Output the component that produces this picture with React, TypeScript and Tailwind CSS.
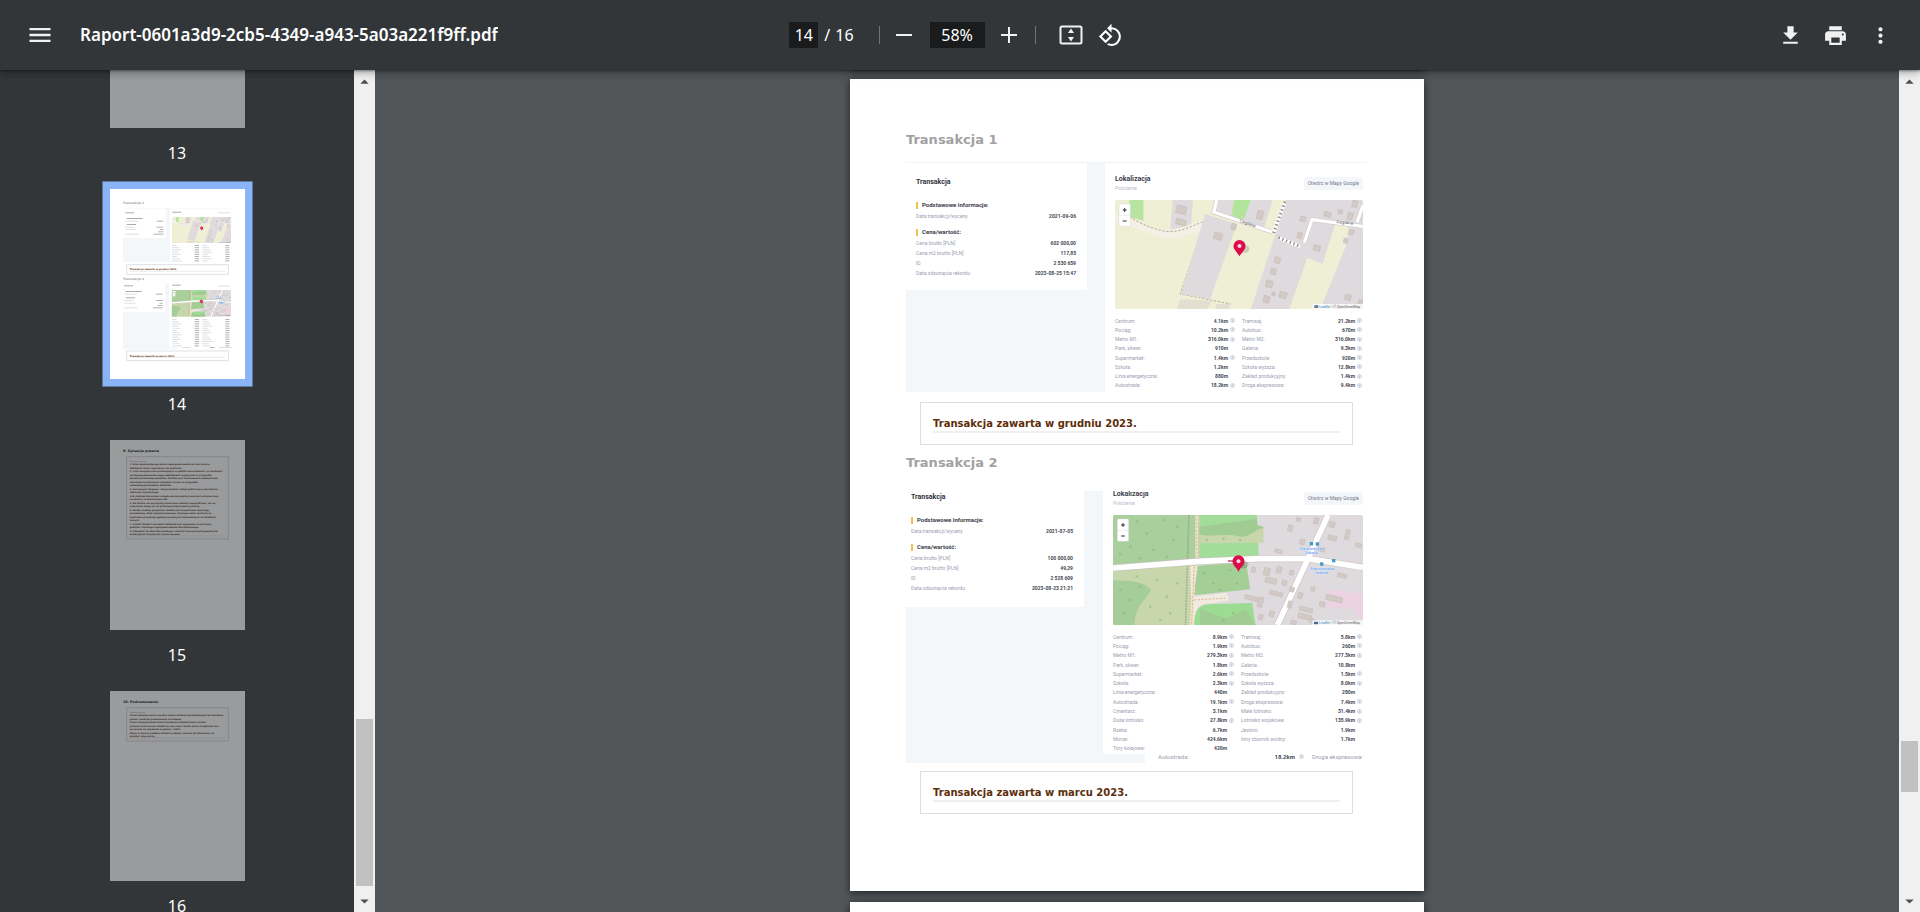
import type { ReactNode } from "react";
import { MdDownload, MdMenu, MdMoreVert, MdPrint, MdRotate90DegreesCcw } from "react-icons/md";

type Distance = [label: string, value: string, info: boolean];

const nearbyFirst: [Distance, Distance][] = [
  [["Centrum:", "4.1km", true], ["Tramwaj:", "21.2km", true]],
  [["Pociąg:", "10.2km", true], ["Autobus:", "670m", true]],
  [["Metro M1:", "316.0km", true], ["Metro M2:", "316.0km", true]],
  [["Park, skwer:", "910m", false], ["Galeria:", "9.3km", true]],
  [["Supermarket:", "1.4km", true], ["Przedszkole:", "920m", true]],
  [["Szkoła:", "1.2km", false], ["Szkoła wyższa:", "12.8km", true]],
  [["Linia energetyczna:", "880m", false], ["Zakład produkcyjny:", "1.4km", true]],
  [["Autostrada:", "18.2km", true], ["Droga ekspresowa:", "9.4km", true]],
];

const nearbySecond: [Distance, Distance | null][] = [
  [["Centrum:", "8.9km", true], ["Tramwaj:", "5.8km", true]],
  [["Pociąg:", "1.9km", true], ["Autobus:", "260m", true]],
  [["Metro M1:", "279.3km", true], ["Metro M2:", "277.3km", true]],
  [["Park, skwer:", "1.8km", true], ["Galeria:", "10.8km", false]],
  [["Supermarket:", "2.6km", true], ["Przedszkole:", "1.5km", true]],
  [["Szkoła:", "2.3km", true], ["Szkoła wyższa:", "8.0km", true]],
  [["Linia energetyczna:", "440m", false], ["Zakład produkcyjny:", "280m", false]],
  [["Autostrada:", "19.1km", true], ["Droga ekspresowa:", "7.4km", true]],
  [["Cmentarz:", "3.1km", false], ["Małe lotnisko:", "31.4km", true]],
  [["Duże lotnisko:", "27.8km", true], ["Lotnisko wojskowe:", "135.9km", true]],
  [["Rzeka:", "6.7km", false], ["Jezioro:", "1.9km", false]],
  [["Morze:", "424.6km", false], ["Inny zbiornik wodny:", "1.7km", false]],
  [["Tory kolejowe:", "420m", false], null],
];

function Pin({ x, y }: { x: number; y: number }) {
  return (
    <g>
      <ellipse cx={x + 14} cy={y - 22} rx="16" ry="12" fill="#000" opacity="0.14" />
      <path
        d={`M${x} ${y}C${x - 6} ${y - 12} ${x - 18} ${y - 19} ${x - 18} ${y - 31}a18 18 0 0 1 36 0C${x + 18} ${y - 19} ${x + 6} ${y - 12} ${x} ${y}z`}
        fill="#dc0c4b"
      />
      <circle cx={x} cy={y - 31} r="6" fill="#f7d5df" />
    </g>
  );
}

function ZoomControl({ x, y }: { x: number; y: number }) {
  return (
    <g>
      <rect x={x} y={y} width="34" height="67" rx="3" fill="#fff" stroke="#cfcfcf" />
      <path d={`M${x} ${y + 34}h34`} stroke="#ddd" strokeWidth="1.5" />
      <path d={`M${x + 11} ${y + 18}h12M${x + 17} ${y + 12}v12M${x + 11} ${y + 51}h12`} stroke="#333" strokeWidth="3" />
    </g>
  );
}

function Attribution({ x, y }: { x: number; y: number }) {
  return (
    <g>
      <rect x={x} y={y} width="152" height="15" fill="#fff" opacity="0.75" />
      <path d={`M${x + 5} ${y + 6}h12`} stroke="#3277c9" strokeWidth="4" />
      <path d={`M${x + 5} ${y + 10}h12`} stroke="#444" strokeWidth="3" />
      <text x={x + 20} y={y + 11} fontSize="11" fill="#2f86b8">Leaflet</text>
      <text x={x + 58} y={y + 11} fontSize="10" fill="#555">| © OpenStreetMap</text>
    </g>
  );
}

function Houses({ at }: { at: [number, number, number, number][] }) {
  return (
    <g fill="#d3cac6" stroke="#c2b8b3" strokeWidth="1.5">
      {at.map(([x, y, w, h]) => (
        <rect key={`${x}-${y}`} x={x} y={y} width={w} height={h} transform={`rotate(14 ${x} ${y})`} />
      ))}
    </g>
  );
}

type Frame = { className?: string; x?: number; y?: number; width?: number; height?: number };

function FieldMap(frame: Frame) {
  return (
    <svg {...frame} viewBox="75 150 743 327" preserveAspectRatio="none" fontFamily="Roboto, sans-serif" role="img" aria-label="Mapa">
      <rect x="75" y="150" width="743" height="327" fill="#eeefd4" />
      <path d="M118 150h42v62l-42-12z" fill="#b7e4a1" />
      <path d="M248 150h60l-4 72-64 22z" fill="#dfdadd" />
      <path d="M75 190c40 8 60 28 105 42 50 16 95 6 160-24l8 6-14 36c-10-8-30 0-64 12-30 8-66 0-90-10-40-16-70-30-105-40z" fill="#f4f0e6" />
      <path d="M118 200c40 24 70 38 110 44 40 4 70-12 118-32M346 212L270 432l92 18 60 12" fill="none" stroke="#aa9f92" strokeWidth="2.5" strokeDasharray="7 5" />
      <path d="M345 192l95 30-80 226-88-16z" fill="#dfdadd" />
      <path d="M378 150h172l-30 90-145-55z" fill="#dfdadd" />
      <path d="M432 150h50l-22 60-36-14z" fill="#b2e59b" />
      <path d="M546 150h40l-33 112-33-20z" fill="#eeefd4" />
      <path d="M586 150h232v75h-84l-37 117-46-18-98-62z" fill="#dfdadd" />
      <path d="M553 262l98 62-53 153H482z" fill="#dfdadd" />
      <path d="M735 225h41l-8 60-78 192h-92l53-152 46 17z" fill="#eeefd4" />
      <path d="M776 225h42v252H690l78-192z" fill="#dfdadd" />
      <path d="M270 448l95 4-14 25h-90zM378 462h40v15h-40z" fill="#e2dfd0" />
      <path d="M380 150l-9 36 174 60M642 278l23-69 153 20M818 166l-18 52" fill="none" stroke="#c9c3c0" strokeWidth="13" />
      <path d="M380 150l-9 36 174 60M642 278l23-69 153 20M818 166l-18 52" fill="none" stroke="#fff" strokeWidth="10" />
      <path d="M584 155l-34 95M565 263l64 26" fill="none" stroke="#fff" strokeWidth="11" />
      <path d="M584 155l-34 95M565 263l64 26" fill="none" stroke="#8b8586" strokeWidth="9" strokeDasharray="4 8" />
      <Houses
        at={[
          [262, 164, 30, 24], [260, 205, 30, 16], [374, 246, 24, 20], [426, 220, 14, 18], [504, 180, 18, 26], [632, 198, 16, 14],
          [624, 246, 14, 18], [704, 184, 20, 14], [746, 178, 12, 12], [788, 150, 16, 20], [774, 186, 16, 22], [778, 238, 14, 14],
          [672, 284, 20, 16], [762, 264, 12, 14], [556, 320, 16, 18], [544, 354, 16, 18], [530, 390, 20, 20], [522, 436, 18, 20],
          [546, 426, 10, 10], [570, 424, 22, 18], [766, 432, 18, 16], [806, 448, 12, 14],
        ]}
      />
      <g fontSize="14" fill="#4a4648" stroke="#fff" strokeWidth="2" paintOrder="stroke">
        <text x="447" y="216" transform="rotate(18 447 216)">Ceglana</text>
        <text x="738" y="219" transform="rotate(5 738 219)">Ceglana</text>
      </g>
      <Pin x={448} y={319} />
      <ZoomControl x={87} y={162} />
      <Attribution x={667} y={462} />
    </svg>
  );
}

const trees = [
  [140, 125], [170, 160], [220, 120], [250, 180], [190, 210], [120, 200], [90, 222], [260, 140], [150, 235], [230, 230], [90, 330],
  [120, 360], [100, 400], [150, 320], [200, 300], [180, 380], [230, 350], [240, 400], [210, 420], [140, 290], [260, 310], [340, 280],
  [370, 310], [420, 270], [440, 310], [390, 330], [350, 180], [400, 176], [450, 180], [430, 400], [400, 420],
];

function ForestMap(frame: Frame) {
  return (
    <svg {...frame} viewBox="68 105 751 330" preserveAspectRatio="none" fontFamily="Roboto, sans-serif" role="img" aria-label="Mapa">
      <rect x="68" y="105" width="751" height="330" fill="#dfdadd" />
      <path d="M68 105h260v140l-260 12z" fill="#a9cf9d" />
      <path d="M68 270l252-16-14 181H68z" fill="#c8d7ab" />
      <path d="M68 300c40 4 90 0 115 30-20 34-50 50-50 105H68z" fill="#a4cd98" />
      <path d="M328 105h172l6 125-178 10z" fill="#a3dd9a" />
      <path d="M328 140l172-24 2 20 18 4-6 22-40 10-60-6-60 4-26-6z" fill="#a0cc93" />
      <path d="M328 164c50 8 80-6 120 6 30 6 50-28 72-24v42l-192 2z" fill="#c8d7ab" />
      <path d="M318 258l150-12 12 82-170 18z" fill="#a3cf97" />
      <path d="M300 258h22l-12 92h-8z" fill="#f1e8da" />
      <path d="M306 350l104-12 6 24-70 10c-24 4-30 16-34 63h-10z" fill="#f0eadf" />
      <path d="M312 435c0-40 10-58 40-62l134-4 10 66z" fill="#9bdb92" />
      <path d="M330 386l78 30 58-28 30 47H330z" fill="#a0cc93" />
      <path d="M712 328l107 14v80l-30-36-82-4z" fill="#ecd2e2" />
      <path d="M296 105l-10 330" stroke="#8f9d89" strokeWidth="5" strokeDasharray="5 3" opacity="0.7" />
      <path d="M320 105v145M312 260l-8 175" stroke="#f3e3cf" strokeWidth="9" />
      <path d="M320 105v145M312 260l-8 175M312 360l98-6" fill="none" stroke="#d68a66" strokeWidth="2.5" strokeDasharray="6 5" opacity="0.75" />
      <path d="M68 264l260-20 180-8h146l165 26M654 236l60-131M654 236l-92 199" fill="none" stroke="#cbc4c3" strokeWidth="21" />
      <path d="M68 264l260-20 180-8h146l165 26M654 236l60-131M654 236l-92 199" fill="none" stroke="#fff" strokeWidth="17" />
      <Houses
        at={[
          [596, 134, 14, 18], [620, 112, 12, 10], [674, 112, 14, 18], [720, 124, 16, 16], [770, 148, 12, 30], [716, 164, 26, 14],
          [556, 206, 22, 10], [632, 176, 14, 16], [686, 200, 20, 12], [798, 188, 18, 12], [486, 260, 12, 16], [524, 262, 18, 22],
          [528, 290, 34, 16], [562, 258, 14, 20], [600, 270, 12, 14], [578, 300, 14, 14], [600, 320, 14, 14], [540, 330, 40, 12],
          [466, 344, 40, 12], [508, 350, 14, 30], [626, 336, 14, 18], [664, 320, 12, 12], [596, 362, 12, 20], [630, 378, 40, 12],
          [626, 398, 40, 14], [508, 402, 12, 16], [540, 392, 14, 16], [710, 342, 50, 16], [744, 278, 28, 12], [604, 420, 16, 12],
          [690, 364, 16, 14], [660, 414, 14, 14],
        ]}
      />
      <g fill="#7fae78">
        {trees.map(([x, y]) => (
          <circle key={`${x}-${y}`} cx={x} cy={y} r="4" opacity="0.45" />
        ))}
      </g>
      <g fill="#3f9cc4">
        <rect x="659" y="186" width="10" height="10" />
        <rect x="677" y="187" width="10" height="10" />
        <rect x="690" y="247" width="10" height="10" />
        <rect x="726" y="237" width="10" height="10" />
      </g>
      <g fontSize="13" fill="#4b8fe8" stroke="#eef4ff" strokeWidth="2" paintOrder="stroke" textAnchor="middle">
        <text x="664" y="211">Starowiejska</text>
        <text x="663" y="222">Szkoła</text>
        <text x="696" y="271">Starowiejska</text>
        <text x="694" y="283">Szkoła</text>
      </g>
      <path d="M413 243h20" stroke="#c3476b" strokeWidth="5" />
      <Pin x={445} y={275} />
      <ZoomControl x={81} y={117} />
      <Attribution x={667} y={421} />
    </svg>
  );
}

function InfoDot() {
  return (
    <svg viewBox="0 0 10 10" className="mx-auto block size-[5px]" aria-hidden="true">
      <circle cx="5" cy="5" r="4" fill="#eceef3" stroke="#c6c9d4" strokeWidth="1.5" />
      <path d="M5 3v4" stroke="#b4b8c6" strokeWidth="1.5" />
    </svg>
  );
}

function DistanceCells({ item, wide }: { item: Distance | null; wide: boolean }) {
  return (
    <>
      <th scope="row" className="text-left font-normal text-[#9a9eb0]">{item?.[0]}</th>
      <td className="text-right font-bold text-[#444753]">{item?.[1]}</td>
      <td className={wide ? "w-[14px] pr-1.5" : "w-2"}>{item?.[2] && <InfoDot />}</td>
    </>
  );
}

function DistanceTable({ rows, className }: { rows: [Distance, Distance | null][]; className: string }) {
  return (
    <table className={`mt-[7px] w-full table-fixed whitespace-nowrap text-[5px] leading-[8px] ${className}`}>
      <tbody>
        {rows.map(([a, b]) => (
          <tr key={a[0]}>
            <DistanceCells item={a} wide />
            <DistanceCells item={b} wide={false} />
          </tr>
        ))}
      </tbody>
    </table>
  );
}

function SectionTitle({ children, className }: { children: ReactNode; className: string }) {
  return (
    <h4 className={`flex items-center gap-1 text-[6px] leading-[10px] font-bold text-[#3d404c] ${className}`}>
      <span className="h-[7px] w-[2px] bg-[#f0c04a]" />
      {children}
    </h4>
  );
}

function Detail({ label, value }: { label: string; value: string }) {
  return (
    <div className="flex justify-between text-[5px] leading-[10px]">
      <dt className="text-[#9a9eb0]">{label}</dt>
      <dd className="font-bold text-[#444753]">{value}</dd>
    </div>
  );
}

function Summary({ date, prices, className }: { date: string; prices: [string, string][]; className: string }) {
  return (
    <section className={`self-start bg-white pr-[11px] ${className}`}>
      <h3 className="text-[7px] leading-[10px] font-bold text-[#2f323d]">Transakcja</h3>
      <SectionTitle className="mt-[13px]">Podstawowe informacje:</SectionTitle>
      <dl className="mt-px">
        <Detail label="Data transakcji/wyceny" value={date} />
      </dl>
      <SectionTitle className="mt-1.5">Cena/wartość:</SectionTitle>
      <dl className="mt-px">
        {prices.map(([label, value]) => (
          <Detail key={label} label={label} value={value} />
        ))}
      </dl>
    </section>
  );
}

function LocationHeader({ className }: { className: string }) {
  return (
    <div className={`flex items-center justify-between ${className}`}>
      <div>
        <h3 className="text-[7px] leading-[10px] font-bold text-[#3d404c]">Lokalizacja</h3>
        <p className="text-[5px] leading-[8px] text-[#b9bcc9]">Położenie</p>
      </div>
      <button type="button" className="h-[13px] rounded-[2px] bg-[#f3f7fa] px-1 text-[5px] leading-[13px] text-[#73788a]">
        Otwórz w Mapy Google
      </button>
    </div>
  );
}

function Note({ children, className }: { children: ReactNode; className: string }) {
  return (
    <div className={`mr-[14px] ml-[14px] h-[43px] border border-[#dedede] px-3 pt-[14px] ${className}`}>
      <p className="border-b-2 border-[#efefef] text-[10px] leading-[14px] font-bold text-[#5c2e0c]">{children}</p>
    </div>
  );
}

function ReportPage() {
  return (
    <article className="w-[574px] shrink-0 bg-white pt-[53px] pr-[57px] pb-[77px] pl-[56px] font-['DejaVu_Sans',sans-serif] shadow-[0_2px_8px_rgba(0,0,0,0.6)]">
      <h2 className="text-[13px] leading-4 font-bold text-[#a2a2a2]">Transakcja 1</h2>
      <div className="mt-[14px] flex h-[230px] justify-between border-t border-[#f1f4f7] bg-[#f3f7fa] font-[Roboto,sans-serif]">
        <Summary
          className="w-[181px] pt-[14px] pb-3 pl-2.5"
          date="2021-09-06"
          prices={[
            ["Cena brutto [PLN]", "602 000,00"],
            ["Cena m2 brutto [PLN]", "117,85"],
            ["ID", "2 530 659"],
            ["Data odsunięcia rekordu", "2023-08-25 15:47"],
          ]}
        />
        <section className="w-[262px] bg-white pt-[11px] pr-1 pl-2.5">
          <LocationHeader className="mb-2" />
          <FieldMap className="block h-[109px] w-full rounded-[2px]" />
          <DistanceTable rows={nearbyFirst} className="h-[74px]" />
        </section>
      </div>
      <Note className="mt-2.5">Transakcja zawarta w grudniu 2023.</Note>

      <h2 className="mt-2.5 text-[13px] leading-4 font-bold text-[#a2a2a2]">Transakcja 2</h2>
      <div className="mt-5 flex h-[272px] flex-col bg-[#f3f7fa] font-[Roboto,sans-serif]">
        <div className="flex h-[263px] justify-between">
          <Summary
            className="w-[178px] pt-px pb-[14px] pl-[5px]"
            date="2021-07-05"
            prices={[
              ["Cena brutto [PLN]", "100 000,00"],
              ["Cena m2 brutto [PLN]", "49,29"],
              ["ID", "2 528 609"],
              ["Data odsunięcia rekordu", "2023-08-23 21:21"],
            ]}
          />
          <section className="w-[264px] overflow-hidden bg-white pr-1 pl-2.5">
            <LocationHeader className="-mt-0.5 mb-2" />
            <ForestMap className="block h-[110px] w-full rounded-[2px]" />
            <DistanceTable rows={nearbySecond} className="h-[121px]" />
          </section>
        </div>
        <div className="ml-[239px] flex h-[9px] justify-between overflow-hidden bg-white pr-1 pl-[13px] text-[6px] leading-[6px] whitespace-nowrap text-[#9a9eb0]">
          <span>Autostrada:</span>
          <span className="ml-auto flex gap-1 font-bold text-[#444753]">
            18.2km <InfoDot />
          </span>
          <span className="ml-2">Droga ekspresowa:</span>
        </div>
      </div>
      <Note className="mt-2">Transakcja zawarta w marcu 2023.</Note>
    </article>
  );
}

function Bars({ rows }: { rows: [number, number, number, string][] }) {
  return (
    <g>
      {rows.map(([x, y, w, fill]) => (
        <rect key={`${x}-${y}`} x={x} y={y} width={w} height="3" fill={fill} opacity="0.45" />
      ))}
    </g>
  );
}

function distanceBars(top: number, count: number): [number, number, number, string][] {
  return Array.from({ length: count }, (_, i) => i).flatMap((i): [number, number, number, string][] => {
    const y = top + i * 6.6;
    return [
      [246, y, 14 + ((i * 7) % 17), "#b5b8c4"],
      [314, y, 13, "#555"],
      [337, y, 15 + ((i * 5) % 17), "#b5b8c4"],
      [406, y, 12, "#555"],
    ];
  });
}

function PreviewTransactions() {
  return (
    <svg viewBox="60 57 405 570" className="block h-[190px] w-full bg-white" fontFamily="DejaVu Sans, sans-serif" fontWeight="bold" aria-hidden="true">
      <g fontSize="9" fill="#a2a2a2">
        <text x="99" y="102">Transakcja 1</text>
        <text x="99" y="330">Transakcja 2</text>
      </g>
      <rect x="99" y="114" width="326" height="162" fill="#f3f7fa" />
      <rect x="99" y="116" width="128" height="88" fill="#fff" />
      <rect x="240" y="116" width="186" height="160" fill="#fff" />
      <rect x="99" y="342" width="326" height="196" fill="#f3f7fa" />
      <rect x="99" y="342" width="126" height="84" fill="#fff" />
      <rect x="238" y="342" width="188" height="190" fill="#fff" />
      <rect x="268" y="530" width="158" height="8" fill="#fff" />
      <Bars
        rows={[
          [106, 127, 26, "#444"], [110, 144, 48, "#444"], [106, 152, 38, "#b5b8c4"], [200, 152, 20, "#555"], [110, 162, 28, "#444"],
          [106, 170, 28, "#b5b8c4"], [199, 170, 21, "#555"], [106, 177, 34, "#b5b8c4"], [210, 177, 10, "#555"], [204, 184, 16, "#555"],
          [106, 191, 40, "#b5b8c4"], [190, 191, 31, "#555"], [247, 125, 26, "#444"], [384, 127, 36, "#b5b8c4"],
          [102, 346, 27, "#444"], [107, 363, 48, "#444"], [102, 371, 38, "#b5b8c4"], [198, 371, 20, "#555"], [107, 382, 28, "#444"],
          [102, 390, 28, "#b5b8c4"], [198, 390, 21, "#555"], [102, 398, 34, "#b5b8c4"], [208, 398, 10, "#555"], [202, 405, 16, "#555"],
          [102, 412, 40, "#b5b8c4"], [188, 412, 31, "#555"], [246, 344, 26, "#444"], [384, 347, 36, "#b5b8c4"],
          [277, 531, 24, "#b5b8c4"], [360, 531, 14, "#555"], [387, 531, 38, "#b5b8c4"],
          ...distanceBars(225, 8), ...distanceBars(447, 13),
        ]}
      />
      <FieldMap x={246} y={141} width={177} height={78} />
      <ForestMap x={245} y={360} width={178} height={80} />
      <g fill="none" stroke="#e2e2e2" strokeWidth="3">
        <rect x="110" y="284" width="305" height="29" />
        <rect x="110" y="543" width="305" height="29" />
        <path d="M119 304h287M119 562h287" strokeWidth="2" />
      </g>
      <g fontSize="7" fill="#5c2e0c">
        <text x="119" y="300">Transakcja zawarta w grudniu 2023.</text>
        <text x="119" y="560">Transakcja zawarta w marcu 2023.</text>
      </g>
    </svg>
  );
}

function PreviewText({ title, caption, lines, bottom }: { title: string; caption: string; lines: [number, string][]; bottom: number }) {
  return (
    <svg viewBox="60 63 405 570" className="block h-[190px] w-full bg-white" fontFamily="DejaVu Sans, sans-serif" fontWeight="bold" aria-hidden="true">
      <text x="99" y="99" fontSize="10" fill="#000">{title}</text>
      <rect x="110" y="113" width="305" height={bottom - 113} fill="none" stroke="#d4d4d4" strokeWidth="3" />
      <path d={`M119 ${bottom - 9}h287`} stroke="#dcdcdc" strokeWidth="2" />
      <text x="119" y="129" fontSize="6" fontWeight="normal" fill="#777">{caption}</text>
      <g fontSize="6.6" fill="#4a2208">
        {lines.map(([y, line]) => (
          <text key={y} x="119" y={y + 2}>{line}</text>
        ))}
      </g>
    </svg>
  );
}

const legalLines: [number, string][] = [
  [136, "1. Brak obowiązującego planu zagospodarowania na tym terenie."],
  [148, "Możliwość stanu zagrożenia lub nadzieleń."],
  [157, "2. Linia energetyczna przebiegająca w pobliżu nieruchomości, w zależności"],
  [169, "od zagospodarowania mogą oddziaływać negatywnie w przypadku"],
  [178, "planów przebudowy obiektów. Możliwe jest zastosowanie oświadczenia"],
  [190, "warunków technicznych odległości terenu w przypadku"],
  [199, "rozbudowy/przebudowy obiektów."],
  [211, "3. Dostępność drogowa - bezpośrednia z drogi publicznej o charakterze"],
  [220, "lokalnym utwardzonym."],
  [232, "4.W studium kierunków rozwoju obszaru gminy teren jest przeznaczony"],
  [241, "na obszary zurbanizowane MN"],
  [253, "5. Na działce nie występują zaznaczone obiekty topograficzne, nie na"],
  [262, "oznaczenie mapy ani na przebieg bezpośrednio graniczy."],
  [274, "6. Media: według geoportalu działka jest zaopatrzona wodociąg,"],
  [283, "przydomowy. Brak sytuacji prawnego. Wymaga zmian zasilenia na"],
  [295, "podstawie przepisów ogólnych prawnych ustanowionych na działkach"],
  [304, "rolnych."],
  [316, "7. Kształt działki i szerokość działania jest optymalny na potrzeby"],
  [325, "podziału i dalszego zagospodarowania mieszkaniowego."],
  [337, "8. Odległość do zbiornika wodnego i atrakcji turystycznych powyżej km"],
  [346, "atrakcyjność turystyczna terenu wysoka."],
];

const closingLines: [number, string][] = [
  [136, "Przed zakupem warto uzyskać zakres działek indywidualnego lub zabudowy"],
  [148, "prawa z ważnym pozwoleniem na budowę."],
  [157, "Przed zakupem konieczność uzyskania zaświadczenia o braku"],
  [169, "przeznaczenia terenu działki na cele rolne i braku planu urządzenia lasu"],
  [178, "na terenie do uzyskania w gminie / lublin."],
  [190, "Mamy w ofercie podobne działki w okolicy. Zostaw mi informację czy"],
  [199, "prześlać taką ofertę."],
];

function Thumbnail({ page, active, children }: { page: number; active?: boolean; children?: ReactNode }) {
  return (
    <li className="flex flex-col items-center">
      <button
        type="button"
        aria-label={`Strona ${page}`}
        className={
          active
            ? "h-[190px] w-[135px] bg-white shadow-[0_0_0_7px_#8ab4f8,0_0_0_8px_#5c76a0]"
            : "h-[190px] w-[135px] bg-white opacity-50"
        }
      >
        {children}
      </button>
      <span className="mt-[15px] mb-[26px] text-base leading-5 text-white">{page}</span>
    </li>
  );
}

function ScrollTrack({ thumb }: { thumb: string }) {
  return (
    <div className="flex w-[21px] shrink-0 flex-col items-center bg-[#f0f0f0]" aria-hidden="true">
      <svg viewBox="0 0 20 20" className="size-[21px] shrink-0"><path d="M10 9L14 13H6z" fill="#505050" /></svg>
      <div className="flex w-full flex-1 flex-col px-0.5">
        <div className={`bg-[#c1c1c1] ${thumb}`} />
      </div>
      <svg viewBox="0 0 20 20" className="size-[21px] shrink-0"><path d="M10 12L14 8H6z" fill="#505050" /></svg>
    </div>
  );
}

function ToolButton({ label, children, className = "" }: { label: string; children: ReactNode; className?: string }) {
  return (
    <button type="button" aria-label={label} title={label} className={`flex size-10 shrink-0 items-center justify-center rounded-full ${className}`}>
      {children}
    </button>
  );
}

function Toolbar() {
  return (
    <header className="relative z-10 grid h-[70px] shrink-0 grid-cols-[1fr_auto_1fr] items-center bg-[#323639] px-5 text-[#f1f1f1] shadow-[0_1px_2px_rgba(0,0,0,0.35),0_3px_8px_rgba(0,0,0,0.3)]">
      <div className="flex min-w-0 items-center gap-5">
        <ToolButton label="Menu"><MdMenu className="size-7" /></ToolButton>
        <h1 className="truncate text-[17px] leading-6 font-semibold text-white">Raport-0601a3d9-2cb5-4349-a943-5a03a221f9ff.pdf</h1>
      </div>
      <div className="flex items-center text-base text-white">
        <input aria-label="Numer strony" defaultValue="14" className="h-[26px] w-[29px] bg-[#191b1c] text-center" />
        <span className="ml-[6px]">/</span>
        <span className="ml-[5px]">16</span>
        <span className="ml-[25px] h-[18px] w-px bg-[#707376]" />
        <ToolButton label="Pomniejsz" className="ml-1">
          <svg viewBox="0 0 16 16" className="size-4" stroke="#f1f1f1" strokeWidth="2"><path d="M0 8h16" /></svg>
        </ToolButton>
        <input aria-label="Powiększenie" defaultValue="58%" className="ml-1.5 h-[26px] w-[55px] bg-[#191b1c] text-center" />
        <ToolButton label="Powiększ" className="ml-1">
          <svg viewBox="0 0 16 16" className="size-4" stroke="#f1f1f1" strokeWidth="2"><path d="M0 8h16M8 0v16" /></svg>
        </ToolButton>
        <span className="ml-1.5 h-[18px] w-px bg-[#707376]" />
        <ToolButton label="Dopasuj do strony" className="ml-[15px]">
          <svg viewBox="0 0 24 20" className="h-5 w-6">
            <rect x="1.5" y="1.5" width="21" height="17" rx="1.5" fill="none" stroke="#f1f1f1" strokeWidth="2" />
            <path d="M12 3.5L15 8H9zM12 16.5L15 12H9z" fill="#f1f1f1" />
          </svg>
        </ToolButton>
        <ToolButton label="Obróć w lewo"><MdRotate90DegreesCcw className="size-[25px]" /></ToolButton>
      </div>
      <div className="flex items-center justify-end gap-[5px]">
        <ToolButton label="Pobierz"><MdDownload className="size-[25px]" /></ToolButton>
        <ToolButton label="Drukuj"><MdPrint className="size-[25px]" /></ToolButton>
        <ToolButton label="Więcej"><MdMoreVert className="size-[25px]" /></ToolButton>
      </div>
    </header>
  );
}

export default function App() {
  return (
    <div className="flex h-screen flex-col overflow-hidden bg-[#525659] font-['Noto_Sans','Open_Sans',sans-serif]">
      <Toolbar />
      <div className="flex min-h-0 flex-1">
        <nav aria-label="Miniatury" className="flex w-[375px] shrink-0 bg-[#323639]">
          <ul className="-mt-[132px] flex-1 [clip-path:inset(132px_0_0_0)]">
            <Thumbnail page={13} />
            <Thumbnail page={14} active><PreviewTransactions /></Thumbnail>
            <Thumbnail page={15}>
              <PreviewText title="9. Sytuacja prawna" caption="Sytuacja prawna" lines={legalLines} bottom={360} />
            </Thumbnail>
            <Thumbnail page={16}>
              <PreviewText title="10. Podsumowanie" caption="Podsumowanie" lines={closingLines} bottom={213} />
            </Thumbnail>
          </ul>
          <ScrollTrack thumb="mt-auto mb-[5px] h-[167px]" />
        </nav>
        <main className="flex min-w-0 flex-1 flex-col items-center gap-[11px] overflow-hidden">
          <div className="-mt-[42px] h-10 w-[574px] shrink-0 bg-white shadow-[0_2px_8px_rgba(0,0,0,0.6)]" />
          <ReportPage />
          <div className="h-10 w-[574px] shrink-0 bg-white shadow-[0_2px_8px_rgba(0,0,0,0.6)]" />
        </main>
        <ScrollTrack thumb="mt-auto mb-[99px] h-[51px]" />
      </div>
    </div>
  );
}
